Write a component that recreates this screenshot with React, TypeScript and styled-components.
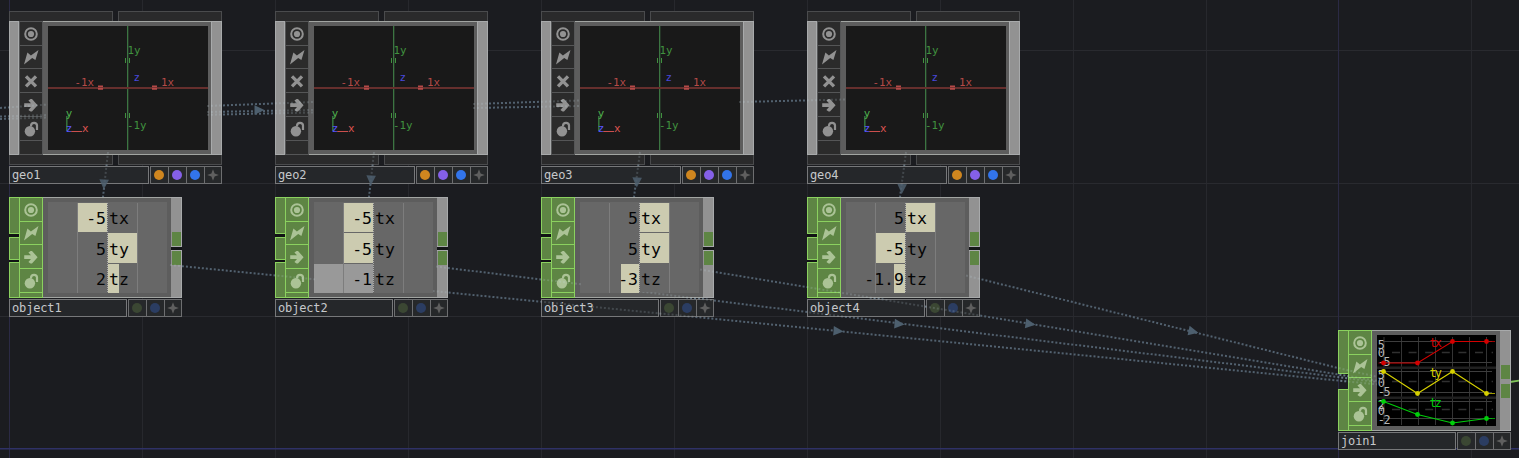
import React from "react";
import styled, { createGlobalStyle, css } from "styled-components";

const mono = `"DejaVu Sans Mono", monospace`;

const Global = createGlobalStyle`
  *, *::before, *::after { box-sizing: border-box; }
  body { margin: 0; background: #1b1c20; overflow: hidden; font-family: ${mono}; }
`;

const Network = styled.main`
  position: relative;
  width: 1519px;
  height: 458px;
  overflow: hidden;
  background: #1b1c20;
`;

const Layer = styled.svg`
  position: absolute;
  inset: 0;
  pointer-events: none;
`;

const NodeBox = styled.section<{ $x: number; $y: number; $w: number }>`
  position: absolute;
  left: ${(p) => p.$x}px;
  top: ${(p) => p.$y}px;
  width: ${(p) => p.$w}px;
  display: flex;
  flex-direction: column;
`;

const Tabs = styled.div<{ $side: "top" | "bottom" }>`
  display: grid;
  grid-template-columns: 104px 104px;
  justify-content: space-between;
  height: 10px;
  > i {
    background: #2a2a2b;
    border: 1px solid #4a4b4d;
    ${(p) => (p.$side === "top" ? "border-bottom: 0;" : "border-top: 0;")}
  }
`;

const Body = styled.div<{ $h: number }>`
  display: flex;
  height: ${(p) => p.$h}px;
`;

const GreyStrip = styled.div<{ $w: number }>`
  width: ${(p) => p.$w}px;
  background: #929292;
  border: 1px solid #a8aaab;
`;

const FlagColumn = styled.div<{ $green?: boolean; $rows: string }>`
  width: 24px;
  display: grid;
  grid-template-rows: ${(p) => p.$rows};
  gap: 1px;
  padding: 1px;
  background: ${(p) => (p.$green ? "#8bd15f" : "#555657")};
  color: ${(p) => (p.$green ? "#abc396" : "#929292")};
`;

const Flag = styled.span<{ $green?: boolean }>`
  display: flex;
  align-items: center;
  justify-content: center;
  overflow: hidden;
  background: ${(p) => (p.$green ? "#5e8544" : "#2b2b2b")};
`;

const Frame = styled.div`
  flex: 1;
  display: flex;
  padding: 4px 3px 4px 5px;
  background: #5d5d5d;
  border: solid #a2a5a2;
  border-width: 1px 0;
`;

const Inputs = styled.div<{ $join?: boolean }>`
  width: 10px;
  display: grid;
  grid-template-rows: ${(p) => (p.$join ? "44px 42px" : "37px 23px 36px")};
  align-content: space-between;
  background: ${(p) => (p.$join ? "transparent" : "#111214")};
  > i {
    background: #5e8544;
    border: 1px solid #8bd15f;
    border-right: 0;
  }
`;

const Outputs = styled.div<{ $solid?: boolean }>`
  width: 11px;
  display: flex;
  flex-direction: column;
  border-top: 1px solid #a8aaab;
  border-bottom: 1px solid #a8aaab;
  border-right: 1px solid #a8aaab;
  padding-left: 1px;
  background: #929292;
  ${(p) =>
    !p.$solid &&
    css`
      > b { margin-left: -1px; margin-right: -1px; background: #141518; border: solid #a8aaab; border-width: 1px 0; }
    `}
`;

const Slot = styled.b<{ $h: number }>`
  height: ${(p) => p.$h}px;
`;
const Port = styled.i<{ $h: number }>`
  height: ${(p) => p.$h}px;
  background: #5e8544;
`;
const Space = styled.span<{ $h: number }>`
  height: ${(p) => p.$h}px;
`;

const Footer = styled.footer<{ $gap: number }>`
  display: flex;
  justify-content: space-between;
  height: 18px;
  margin-top: ${(p) => p.$gap}px;
`;

const Name = styled.div<{ $w: number }>`
  width: ${(p) => p.$w}px;
  padding-left: 2px;
  border: 1px solid #77787a;
  background: #25272a;
  color: #c6c8ca;
  font: 12px/17px ${mono};
  letter-spacing: -0.15px;
`;

const Toggles = styled.div<{ $n: number }>`
  width: ${(p) => p.$n * 18}px;
  display: grid;
  grid-template-columns: repeat(${(p) => p.$n - 1}, 17px) 16px;
  gap: 1px;
  padding: 1px;
  background: #6d6e70;
`;

const Toggle = styled.span`
  display: flex;
  align-items: center;
  padding-left: 3px;
  background: #26282a;
  &:last-child {
    padding-left: 2px;
  }
`;

const Dot = styled.i<{ $c: string }>`
  width: 10px;
  height: 10px;
  border-radius: 50%;
  background: ${(p) => p.$c};
`;

const Channels = styled.div`
  position: relative;
  width: 119px;
  height: 91px;
  display: grid;
  grid-template-rows: 29px 30px 29px;
  row-gap: 1px;
  padding-top: 1px;
  background: #676767;
  &::after {
    content: "";
    position: absolute;
    inset: 1px 0 0 0;
    background:
      linear-gradient(#7d7d7d, #7d7d7d) 29px 0 / 1px 100% no-repeat,
      repeating-linear-gradient(#aaa 0 1px, #666 1px 2px) 59px 0 / 1px 100% no-repeat,
      linear-gradient(#7d7d7d, #7d7d7d) 89px 0 / 1px 100% no-repeat;
  }
`;

const Channel = styled.div`
  display: grid;
  grid-template-columns: 59px 60px;
  grid-template-rows: 100%;
  min-height: 0;
  font: 16.5px/31px ${mono};
  color: #050505;
  white-space: nowrap;
  &:nth-child(2) {
    line-height: 33px;
  }
`;

const barFill = (to: string, w: number, c: string, o: number) =>
  `linear-gradient(to ${to}, transparent ${o}px, ${c} ${o}px ${o + w}px, transparent ${o + w}px)`;

const Value = styled.span<{ $bar: number; $dim?: boolean }>`
  display: flex;
  justify-content: flex-end;
  padding-right: 1px;
  min-height: 0;
  background: ${(p) => (p.$bar ? barFill("left", p.$bar, p.$dim ? "#999" : "#cccbb0", 0) : "none")};
`;

const Label = styled.span<{ $bar: number }>`
  padding-left: 2px;
  min-height: 0;
  background: ${(p) => (p.$bar ? barFill("right", p.$bar, "#cccbb0", 1) : "none")};
`;

type IconKind = "view" | "bolt" | "cross" | "arrow" | "lock";

const Icon = ({ kind }: { kind: IconKind }) => (
  <svg width="16" height="16" viewBox="0 0 16 16" fill="currentColor">
    {kind === "view" && (
      <>
        <circle cx="8" cy="8" r="5.8" fill="none" stroke="currentColor" strokeWidth="2" />
        <circle cx="8" cy="8" r="3.1" />
      </>
    )}
    {kind === "bolt" && <path d="M15.5 1 L12.4 11 L9.2 9 L1 15.4 L4.4 3.6 L7.9 6.4 Z" />}
    {kind === "cross" && (
      <path d="M3 3.3 L13 13.3 M13 3.3 L3 13.3" stroke="currentColor" strokeWidth="3.3" />
    )}
    {kind === "arrow" && (
      <path d="M1.2 6.3 H8 L5.4 3.4 L7.6 1.9 H9 L14.6 8.2 L9 14.4 H7.6 L5.4 12.9 L8 10 H1.2 Z" />
    )}
    {kind === "lock" && (
      <>
        <circle cx="6.9" cy="10.2" r="5.2" />
        <path d="M8 5.6 V4.6 C8.2 0.9 13.8 0.9 14 4.4 V9" fill="none" stroke="currentColor" strokeWidth="2.2" />
      </>
    )}
  </svg>
);

const Star = () => (
  <svg width="12" height="12" viewBox="0 0 12 12">
    <path d="M6 0.2 L7.6 4.4 L11.8 6 L7.6 7.6 L6 11.8 L4.4 7.6 L0.2 6 L4.4 4.4 Z" fill="#5f5f5f" />
  </svg>
);

const Axes = () => (
  <svg width="160" height="124" viewBox="48 26 160 124" fontFamily={mono} fontSize="10.8">
    <rect x="48" y="26" width="160" height="124" fill="#191919" />
    <rect x="127" y="26" width="1" height="124" fill="#3c7542" />
    <rect x="128" y="26" width="0.5" height="124" fill="#305034" />
    <rect x="48" y="87" width="160" height="2" fill="#662f2d" />
    <g fill="#b54a48">
      <path d="M98 85.5h5v1.8h-5z M98 88h5v1.8h-5z M152 85.5h5v1.8h-5z M152 88h5v1.8h-5z" />
      <text x="74.5" y="86">-1x</text>
      <text x="161" y="86">1x</text>
    </g>
    <g fill="#40913f">
      <path d="M125 58h1v5h-1z M129 58h1v5h-1z M125 113h1v5h-1z M129 113h1v5h-1z" />
      <text x="127.5" y="54">1y</text>
      <text x="127" y="129">-1y</text>
    </g>
    <text x="133.5" y="81" fill="#4848da">z</text>
    <rect x="66" y="116" width="1.6" height="15" fill="#356f3a" />
    <rect x="71" y="131" width="11" height="1" fill="#cc4f4d" />
    <text x="65.7" y="117" fill="#4fb04d">y</text>
    <text x="65.7" y="131.5" fill="#5854ff">z</text>
    <text x="82" y="131.5" fill="#e05653">x</text>
  </svg>
);

const series = [
  { name: "tx", color: "#d40000", pts: [[6.5, 28], [40.5, 28], [75.5, 6.5], [109.5, 6.5]], grid: [6, 17, 27], marks: ["5", "0", "-5"], marksY: [14, 21.5, 30.5], ly: 12 },
  { name: "ty", color: "#d6d000", pts: [[6.5, 36.5], [40.5, 58.5], [75.5, 36.5], [109.5, 58.5]], grid: [36, 46, 57], marks: ["5", "0", "-5"], marksY: [44, 51.5, 60.5], ly: 42 },
  { name: "tz", color: "#00cf0a", pts: [[6.5, 66.5], [40.5, 79.5], [75.5, 88], [109.5, 83.5]], grid: [66, 74, 83], marks: ["2", "0", "-2"], marksY: [74, 79.5, 88.5], ly: 72 },
];

const Plot = () => (
  <svg width="119" height="91" viewBox="0 0 119 91" fontFamily={mono} fontSize="11.8">
    <rect width="119" height="91" fill="#000" />
    <path d="M7 2V90 M24.5 2V90 M41.5 2V90 M58.5 2V90 M75.5 2V90 M92.5 2V90 M109.5 2V90" stroke="#343434" />
    <path d="M0 32.7H119 M0 62.7H119" stroke="#202020" strokeWidth="2.6" />
    {series.map((s) => (
      <g key={s.name}>
        <path d={`M6 ${s.grid[0] + 0.5}H115 M6 ${s.grid[2] + 0.5}H115`} stroke="#3d3d3d" />
        <path d={`M15 ${s.grid[1] + 0.5}H116`} stroke="#303030" strokeWidth="1.6" strokeDasharray="8 8.6" />
        {s.marks.map((m, i) => (
          <text key={i} x={0.8} y={s.marksY[i]} fill="#b8b8b8" letterSpacing="-1.4">{m}</text>
        ))}
        <polyline points={s.pts.map((p) => p.join(",")).join(" ")} fill="none" stroke={s.color} strokeWidth="1.1" />
        <path d={`M1.5 ${s.pts[0][1]}H6 M109 ${s.pts[3][1]}H118`} stroke={s.color} opacity="0.75" />
        {s.pts.map((p) => (
          <circle key={p[0]} cx={p[0]} cy={p[1]} r="2.4" fill={s.color} />
        ))}
        <text x="52.5" y={s.ly} fill={s.color} letterSpacing="-1.8">{s.name}</text>
      </g>
    ))}
  </svg>
);

const Flags = ({ kinds, green }: { kinds: IconKind[]; green?: boolean }) => (
  <FlagColumn $green={green} $rows={green ? "23px 22px 23px 23px 1fr" : "23px 22px 23px 23px 23px 1fr"}>
    {kinds.map((k) => (
      <Flag key={k} $green={green}>
        <Icon kind={k} />
      </Flag>
    ))}
    <Flag $green={green} />
  </FlagColumn>
);

const GeoNode = ({ x, name }: { x: number; name: string }) => (
  <NodeBox $x={x} $y={11} $w={213}>
    <Tabs $side="top"><i /><i /></Tabs>
    <Body $h={134}>
      <GreyStrip $w={10} />
      <Flags kinds={["view", "bolt", "cross", "arrow", "lock"]} />
      <Frame><Axes /></Frame>
      <GreyStrip $w={11} />
    </Body>
    <Tabs $side="bottom"><i /><i /></Tabs>
    <Footer $gap={1}>
      <Name $w={140}>{name}</Name>
      <Toggles $n={4}>
        <Toggle><Dot $c="#cf861f" /></Toggle>
        <Toggle><Dot $c="#8560e8" /></Toggle>
        <Toggle><Dot $c="#3274ea" /></Toggle>
        <Toggle><Star /></Toggle>
      </Toggles>
    </Footer>
  </NodeBox>
);

const ChopFooter = ({ name }: { name: string }) => (
  <Footer $gap={1}>
    <Name $w={118}>{name}</Name>
    <Toggles $n={3}>
      <Toggle><Dot $c="#3b4733" /></Toggle>
      <Toggle><Dot $c="#2b3d62" /></Toggle>
      <Toggle><Star /></Toggle>
    </Toggles>
  </Footer>
);

const chopFlags: IconKind[] = ["view", "bolt", "arrow", "lock"];

type Chan = { v: string; l?: number; r?: number; dim?: boolean };

const ObjectNode = ({ x, name, chans }: { x: number; name: string; chans: Chan[] }) => (
  <NodeBox $x={x} $y={197} $w={173}>
    <Body $h={101}>
      <Inputs><i /><i /><i /></Inputs>
      <Flags green kinds={chopFlags} />
      <Frame>
        <Channels>
          {chans.map((c, i) => (
            <Channel key={i}>
              <Value $bar={c.l ?? 0} $dim={c.dim}>{c.v}</Value>
              <Label $bar={c.r ?? 0}>{["tx", "ty", "tz"][i]}</Label>
            </Channel>
          ))}
        </Channels>
      </Frame>
      <Outputs>
        <Space $h={34} /><Port $h={14} /><Slot $h={5} /><Port $h={14} />
      </Outputs>
    </Body>
    <ChopFooter name={name} />
  </NodeBox>
);

const JoinNode = () => (
  <NodeBox $x={1338} $y={330} $w={173}>
    <Body $h={101}>
      <Inputs $join><i /><i /></Inputs>
      <Flags green kinds={chopFlags} />
      <Frame><Plot /></Frame>
      <Outputs $solid>
        <Space $h={34} /><Port $h={14} /><Space $h={5} /><Port $h={14} />
      </Outputs>
    </Body>
    <ChopFooter name="join1" />
  </NodeBox>
);

const columns = [9, 275, 541, 807];

const wires = [
  "M0 108 L48 104.5", "M0 116.5 L48 115", "M0 119 L48 117.5",
  "M207 106 L313 102", "M207 112 L313 110", "M207 114.8 L313 112.5",
  "M473 104 L580 100.5", "M473 108 L580 106",
  "M739 102 L845 99.5",
  "M108 152 L103 197", "M374 152 L369 197", "M640 152 L634 197", "M906 152 L900 197",
  "M170 265 L1378 384.5", "M436 266.5 L1378 382", "M700 269.5 L1378 381", "M966 275.5 L1338 368 L1378 377",
];

const heads: [number, number, number][] = [
  [259, 110, 0], [838, 331, 4], [899, 324, 5], [1030, 324, 8], [1193, 331.5, 12],
  [104, 184, 92], [371, 180, 92], [637, 182, 92], [902, 188.5, 92],
];

const Grid = () => (
  <Layer width="1519" height="458">
    <path d="M142.5 0V458 M275.5 0V458 M408.5 0V458 M541.5 0V458 M674.5 0V458 M807.5 0V458 M940.5 0V458 M1073.5 0V458 M1206.5 0V458 M1471.5 0V458" stroke="#27282d" />
    <path d="M0 50.5H1519 M0 183.5H1519 M0 316.5H1519" stroke="#292a2f" />
    <path d="M9.5 0V458 M1338.5 0V458" stroke="#2b2a45" />
    <path d="M0 448.8H1519" stroke="#2f3166" strokeWidth="1.4" />
  </Layer>
);

const Wires = () => (
  <Layer width="1519" height="458">
    <path d={wires.join(" ")} fill="none" stroke="#52616f" strokeWidth="2" strokeDasharray="2 2" />
    <path d="M1510 382 L1519 380.6" stroke="#7fc45a" strokeWidth="1.8" />
  </Layer>
);

const WireGhosts = () => (
  <Layer width="1519" height="458">
    <mask id="over-nodes" maskUnits="userSpaceOnUse" x="0" y="0" width="1519" height="458">
      {columns.map((x) => (
        <g key={x}>
          <rect x={x} y="11" width="213" height="173" fill="#fff" />
          <rect x={x + 39} y="26" width="159" height="124" fill="#000" />
          <rect x={x} y="197" width="173" height="120" fill="#fff" />
          <rect x={x + 40} y="203" width="118" height="89" fill="#000" />
        </g>
      ))}
      <rect x="1338" y="330" width="39" height="101" fill="#fff" />
    </mask>
    <path d={wires.join(" ")} mask="url(#over-nodes)" fill="none" stroke="#c9dbe8" strokeOpacity="0.18" strokeWidth="2" strokeDasharray="2 2" />
    {heads.map(([x, y, r]) => (
      <path key={x} d="M-4.5 -4.8 L5.5 0 L-4.5 4.8 Z" transform={`translate(${x} ${y}) rotate(${r})`} fill="#4d5f6e" fillOpacity={r > 90 ? 0.85 : 1} />
    ))}
  </Layer>
);

export default function App() {
  return (
    <Network>
      <Global />
      <Grid />
      <Wires />
      {columns.map((x, i) => (
        <GeoNode key={x} x={x} name={`geo${i + 1}`} />
      ))}
      <ObjectNode x={9} name="object1" chans={[{ v: "-5", l: 29 }, { v: "5", r: 29 }, { v: "2", r: 11 }]} />
      <ObjectNode x={275} name="object2" chans={[{ v: "-5", l: 29 }, { v: "-5", l: 29 }, { v: "-1", l: 59, dim: true }]} />
      <ObjectNode x={541} name="object3" chans={[{ v: "5", r: 29 }, { v: "5", r: 29 }, { v: "-3", l: 18 }]} />
      <ObjectNode x={807} name="object4" chans={[{ v: "5", r: 29 }, { v: "-5", l: 29 }, { v: "-1.9", l: 11 }]} />
      <JoinNode />
      <WireGhosts />
    </Network>
  );
}
